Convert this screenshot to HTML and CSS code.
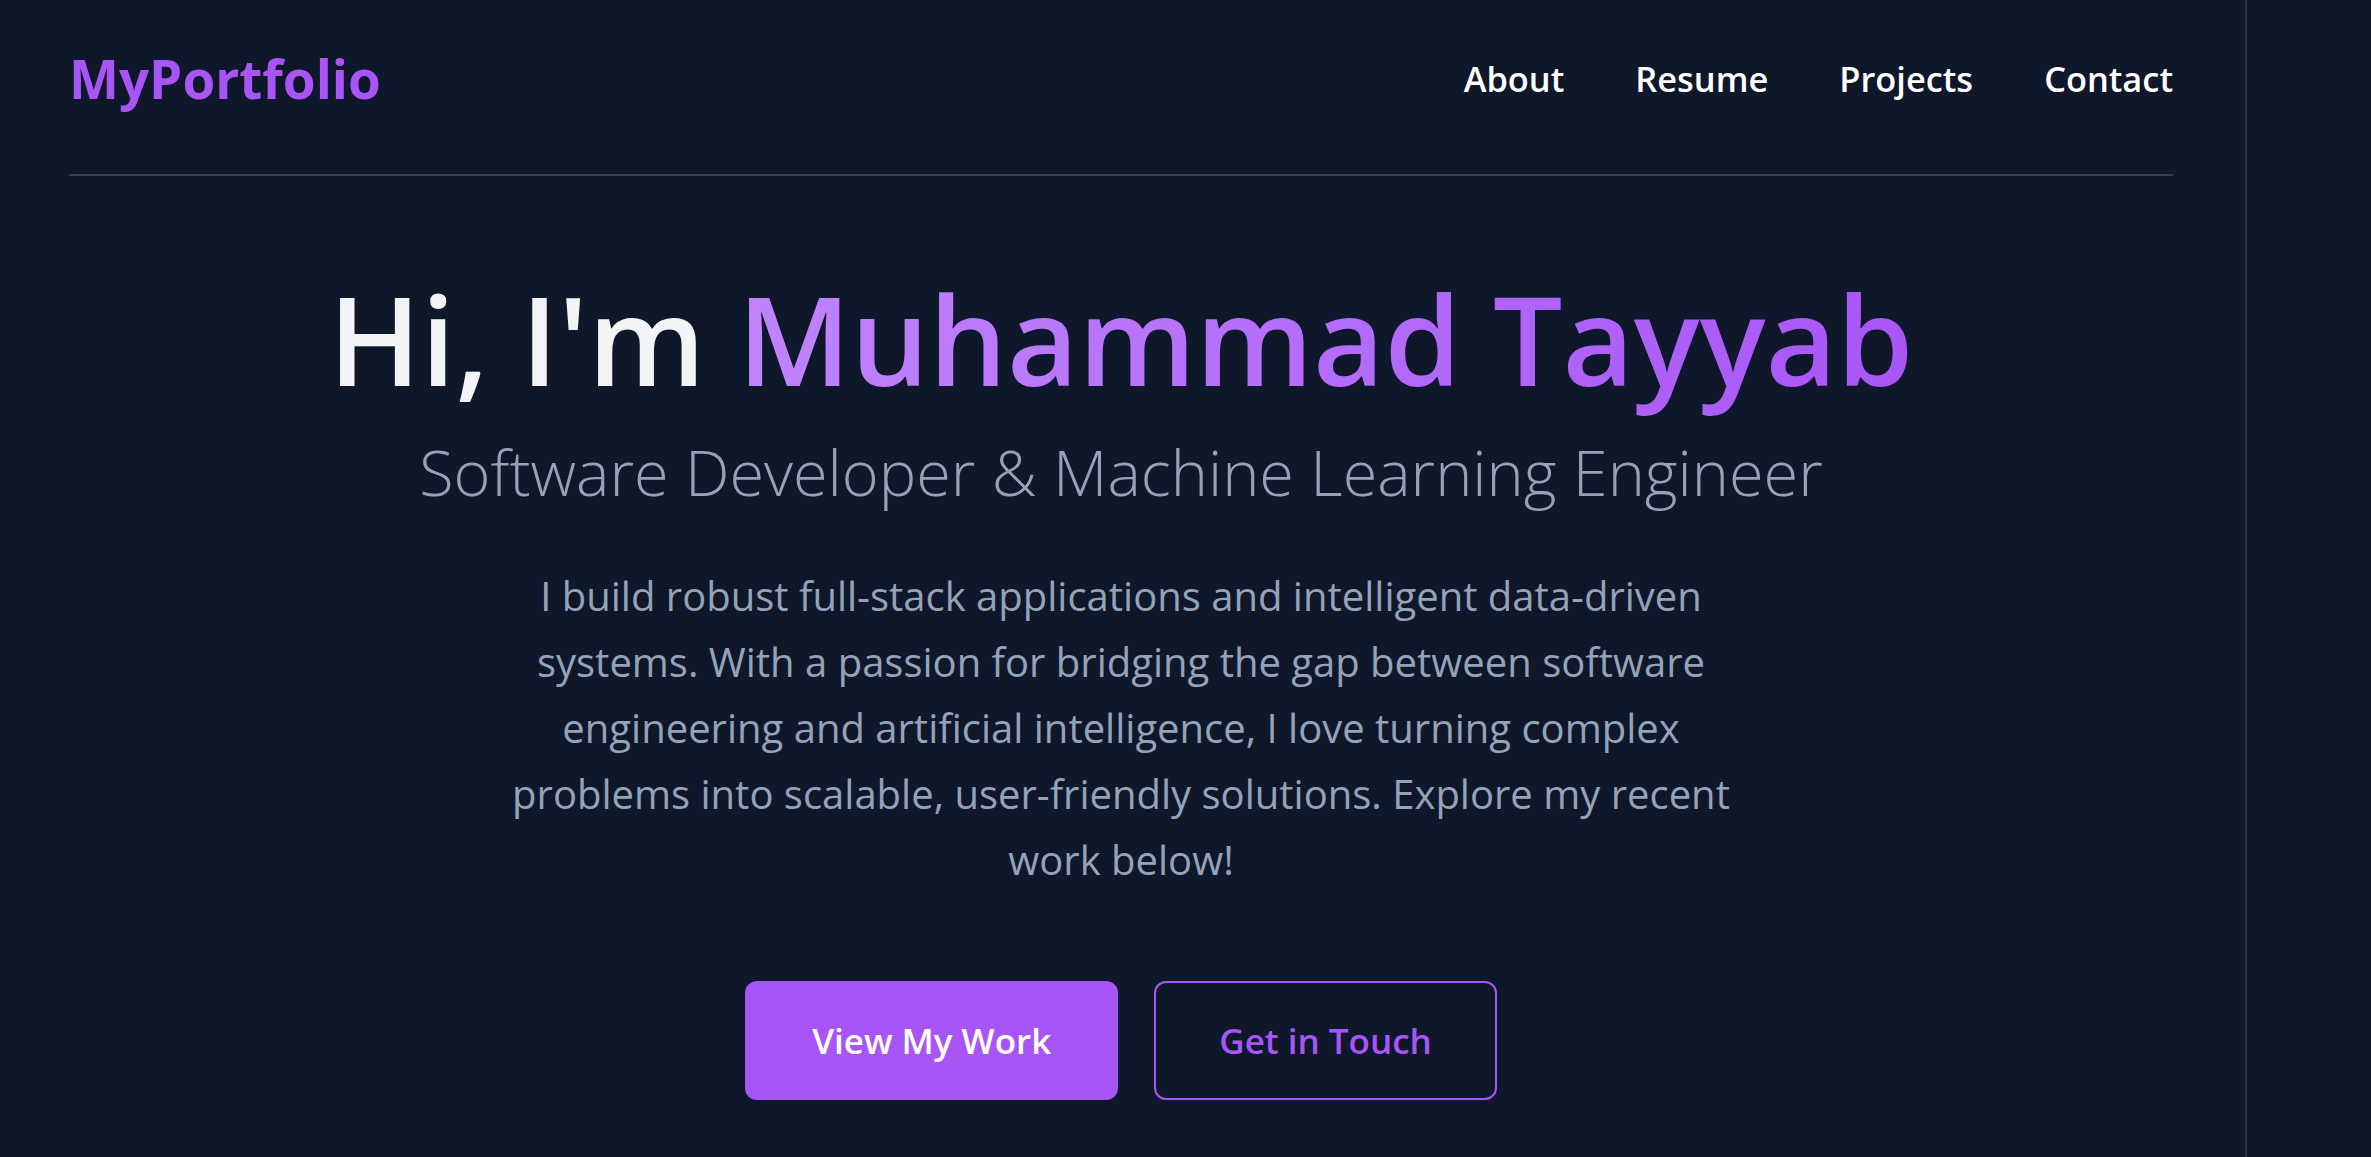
FILE: index.html
```html
<!DOCTYPE html>
<html lang="en">
<head>
<meta charset="utf-8">
<title>MyPortfolio</title>
<link rel="stylesheet" href="styles.css">
</head>
<body>
<div class="frame">
  <main class="main">
    <div class="container">
      <header class="header">
        <a class="logo" href="#">MyPortfolio</a>
        <nav class="nav">
          <a href="#about">About</a>
          <a href="#resume">Resume</a>
          <a href="#projects">Projects</a>
          <a href="#contact">Contact</a>
        </nav>
      </header>
      <section class="hero">
        <h1 class="title">Hi, I'm <span class="name">Muhammad Tayyab</span></h1>
        <h2 class="subtitle">Software Developer &amp; Machine Learning Engineer</h2>
        <p class="intro">I build robust full-stack applications and intelligent data-driven systems. With a passion for bridging the gap between software engineering and artificial intelligence, I love turning complex problems into scalable, user-friendly solutions. Explore my recent work below!</p>
        <div class="actions">
          <a class="btn btn-primary" href="#projects">View My Work</a>
          <a class="btn btn-outline" href="#contact">Get in Touch</a>
        </div>
      </section>
    </div>
  </main>
  <aside class="side"></aside>
</div>
</body>
</html>
```
FILE: styles.css
```css
* { box-sizing: border-box; }
html, body { margin: 0; padding: 0; }
body {
  background: #0f172a;
  font-family: "Open Sans", "Noto Sans", sans-serif;
  color: #f3f4f6;
  height: 1157px;
  overflow: hidden;
}
a { text-decoration: none; }
.frame {
  display: flex;
  height: 1157px;
}
.main {
  flex: 1;
  padding: 0 72px 0 69px;
}
.side {
  width: 126px;
  border-left: 2px solid #30343c;
}
.header {
  display: flex;
  justify-content: space-between;
  align-items: center;
  padding: 43px 0 59px;
  border-bottom: 2px solid #334155;
}
.logo {
  font-size: 53px;
  line-height: 72px;
  font-weight: 700;
  color: #a855f7;
}
.nav {
  display: flex;
  gap: 71px;
}
.nav a {
  font-size: 34.4px;
  line-height: 56px;
  font-weight: 600;
  color: #ffffff;
}
.hero {
  display: flex;
  flex-direction: column;
  align-items: center;
  text-align: center;
  padding-top: 99px;
}
.title {
  margin: 0;
  font-size: 123px;
  line-height: 127px;
  font-weight: 600;
  color: #f3f4f6;
}
.name {
  background: linear-gradient(to right, #c084fc, #a855f7);
  -webkit-background-clip: text;
  background-clip: text;
  color: transparent;
}
.subtitle {
  margin: 30px 0 0;
  font-size: 63px;
  line-height: 80px;
  font-weight: 300;
  color: #94a3b8;
}
.intro {
  margin: 51px 0 0;
  max-width: 1260px;
  font-size: 40px;
  line-height: 66px;
  font-weight: 400;
  color: #94a3b8;
}
.actions {
  display: flex;
  gap: 36px;
  margin-top: 88px;
}
.btn {
  display: block;
  font-size: 35px;
  line-height: 55px;
  font-weight: 600;
  border-radius: 12px;
}
.btn-primary {
  padding: 32px 67px;
  background: #a855f7;
  color: #ffffff;
}
.btn-outline {
  padding: 30px 63px;
  border: 2px solid #a855f7;
  color: #a855f7;
}
```
